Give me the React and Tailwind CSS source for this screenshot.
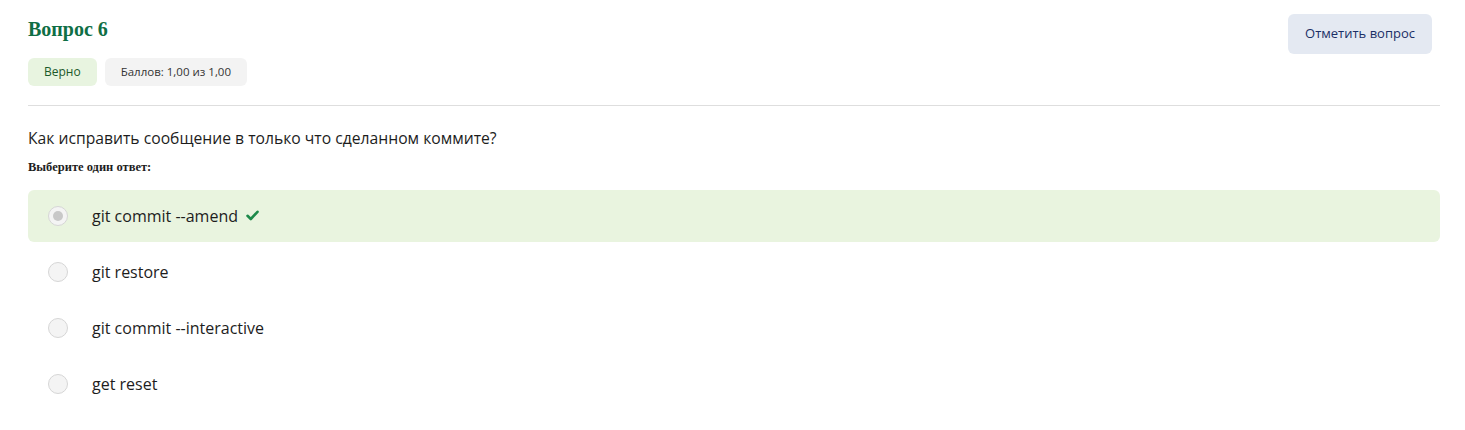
import React from "react";

const options = [
    { label: "git commit --amend", correct: true },
    { label: "git restore" },
    { label: "git commit --interactive" },
    { label: "get reset" },
];

export default function App() {
    return (
        <div className="min-h-screen bg-white pl-[28px] pr-[25px] pt-[14px] text-[#1d1d1d] font-['Open_Sans',sans-serif]">
            <div className="flex items-start justify-between">
                <div>
                    <h2 className="mt-[2px] text-[20px] font-bold leading-[26px] text-[#0f6e45] font-['Liberation_Serif',serif]">
                        Вопрос 6
                    </h2>
                    <div className="mt-[16px] flex gap-2">
                        <span className="flex h-[28px] items-center rounded-[6px] bg-[#e8f4e0] px-[16px] text-[12px] text-[#1c5a2a]">
                            Верно
                        </span>
                        <span className="flex h-[28px] items-center rounded-[6px] bg-[#f3f3f3] px-[16px] text-[11.5px] text-[#333]">
                            Баллов: 1,00 из 1,00
                        </span>
                    </div>
                </div>
                <button className="mr-[8px] h-[40px] rounded-[6px] bg-[#e4e9f2] px-[17px] text-[13px] text-[#1b2f66]">
                    Отметить вопрос
                </button>
            </div>

            <div className="mt-[19px] border-t border-[#dedede]" />

            <p className="mt-[21px] text-[15.7px] leading-[22px]">
                Как исправить сообщение в только что сделанном коммите?
            </p>
            <p className="mt-[9px] text-[12.5px] font-bold font-['Liberation_Serif',serif]">
                Выберите один ответ:
            </p>

            <div className="mt-[13px] flex flex-col gap-[4px]">
                {options.map((o) => (
                    <div
                        key={o.label}
                        className={
                            "flex h-[52px] items-center rounded-[6px] pl-[20px] " +
                            (o.correct ? "bg-[#e9f4df]" : "")
                        }
                    >
                        <span className="flex h-[20px] w-[20px] items-center justify-center rounded-full border border-[#d6d6d6] bg-[#f4f4f4]">
                            {o.correct && (
                                <span className="h-[10px] w-[10px] rounded-full bg-[#c8c8c8]" />
                            )}
                        </span>
                        <span className="ml-[24px] text-[16px]">{o.label}</span>
                        {o.correct && (
                            <svg className="ml-[8px]" width="13" height="11" viewBox="0 0 13 11">
                                <path d="M1.5 5.8 L4.8 9 L11.5 1.8" fill="none" stroke="#1d8a4a" strokeWidth="2.6" strokeLinecap="round" strokeLinejoin="round" />
                            </svg>
                        )}
                    </div>
                ))}
            </div>
        </div>
    );
}
